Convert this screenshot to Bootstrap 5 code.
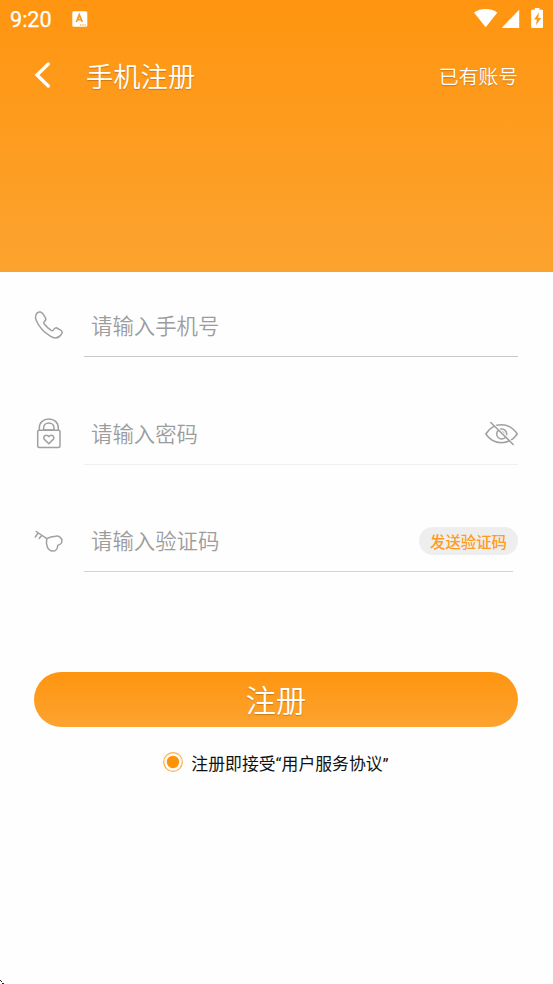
<!DOCTYPE html>
<html lang="zh-CN">
<head>
<meta charset="utf-8">
<meta name="viewport" content="width=device-width, initial-scale=1">
<title>手机注册</title>
<link rel="stylesheet" href="https://cdn.jsdelivr.net/npm/bootstrap@5.3.0/dist/css/bootstrap.min.css">
<style>
  body { font-family: Roboto, "Noto Sans CJK SC", sans-serif; font-weight: 350; background: #fefefe; height: 984px; overflow: hidden; }
  .hero { height: 272px; background: linear-gradient(#ff9510, #fca32f); }
  .status { height: 38px; padding: 0 9px 0 10px; }
  .clock { font-size: 21.6px; font-weight: 400; -webkit-text-stroke: .25px #fff; line-height: 38px; padding-top: 2px; width: 62px; }
  .topbar { height: 74px; padding: 0 35px 0 34px; }
  .topbar .title { font-size: 27.3px; line-height: 40px; margin-left: 35px; padding-top: 5px; font-weight: 350; }
  .has-account { font-size: 19.8px; line-height: 30px; padding-top: 5px; }
  .shade { text-shadow: 0 1px 1px rgba(110, 60, 0, .35); }
  .form-area { padding: 23px 35px 0 34px; }
  .line { display: grid; grid-template-columns: 50px 1fr; }
  .line > .glyph { height: 62px; padding-top: 16px; }
  .line > .glyph.raised { padding-top: 15px; }
  .line > .glyph.lowered { padding-top: 20px; }
  .line > .entry { height: 62px; border-bottom: 1px solid #c8c8c8; }
  .line + .line { margin-top: 46px; }
  .line + .line + .line { margin-top: 45px; }
  .line > .entry.soft { border-color: #f0f0f0; }
  .line > .entry.short { border-color: #d3d3d3; margin-right: 5px; }
  .entry input { font-size: 21.4px; font-weight: 350; line-height: 32px; height: 61px; padding: 2px 0 0 7px; min-width: 0; }
  .entry input::placeholder { color: #9c9c9c; opacity: 1; }
  .code-btn { width: 99px; height: 28px; margin-right: -5px; background: #eee; color: #ff9c1f; font-size: 15.4px; font-weight: 500; line-height: 32px; }
  .submit { height: 55px; margin-top: 100px; background: linear-gradient(#ff9510, #fca32f); font-size: 30.2px; line-height: 60px; font-weight: 350; }
  .agree { margin-top: 25px; height: 24px; font-size: 16.85px; line-height: 24px; font-weight: 400; color: #111; gap: 8px; }
  .agree svg { margin-bottom: 5px; }
  .ink { fill: none; stroke: #a0a0a0; stroke-width: 1.5; stroke-linecap: round; stroke-linejoin: round; }
  svg { display: block; flex: none; }
  .corner { position: absolute; left: 0; top: 980px; }
</style>
</head>
<body>
<header class="hero text-white">
  <div class="status d-flex align-items-center">
    <span class="clock">9:20</span>
    <svg width="16" height="17" viewBox="0 0 16 17">
      <rect x=".3" y=".2" width="15" height="15.6" rx="1.6" fill="#fff"/>
      <path d="M4.300 11 7.300 3.900 10.300 11M5.400 8.700h3.800" fill="none" stroke="#f79a22" stroke-width="1.800"/>
      <path d="M8 14h1.300m1 0h1.300m1 0h1.300" stroke="#f79a22" stroke-width="1.200"/>
    </svg>
    <svg class="ms-auto" width="70" height="22" viewBox="0 0 70 22" fill="#fff">
      <path d="M0 4.500C3.500 2 7.500.9 11.700.9S20 2 23.400 4.500L11.700 19.200Z"/>
      <path d="M45.200 1.700V19.900H27.600Z"/>
      <path d="M60.800 0h4.700v1.800h2.500q1 0 1 1V19q0 1-1 1h-9.800q-1 0-1-1V2.800q0-1 1-1h2.600Z"/>
      <path d="M65 4.500 60 11.500h2.800l-.8 5.700 5.200-7.300h-3Z" fill="#ff9814"/>
    </svg>
  </div>
  <nav class="topbar d-flex align-items-center">
    <svg width="17" height="28" viewBox="0 0 17 28"><path d="M14.300 3 3 14 14.300 25" fill="none" stroke="#fff" stroke-width="3.300" stroke-linecap="round"/></svg>
    <h1 class="title shade mb-0">手机注册</h1>
    <span class="has-account shade ms-auto">已有账号</span>
  </nav>
</header>

<main class="form-area">
  <div class="line">
    <div class="glyph">
      <svg class="ink" width="30" height="30" viewBox="0 0 30 30">
        <path d="M3.300 1.900C5.200.1 7.700.8 9.300 3.400L11.600 7.100C12.600 8.800 11.100 9.800 10.100 10.900C9.600 11.500 9.700 12.100 10.100 12.700C12 15.300 14.400 17.500 17.200 19.400C18 19.900 18.600 19.800 19.100 19.200C20.100 17.800 21.200 16.200 22.800 17L26.700 19.100C28.600 20.300 28.600 21.800 27 23.700C24.500 27.200 20.500 27.800 16.300 25.200C9.800 21.200 4.900 15.700 2.300 9.500C1.100 6.500 1.400 3.600 3.300 1.900Z"/>
      </svg>
    </div>
    <div class="entry d-flex align-items-center"><input type="tel" class="form-control border-0 bg-transparent shadow-none" placeholder="请输入手机号"></div>
  </div>

  <div class="line">
    <div class="glyph raised">
      <svg class="ink" width="30" height="32" viewBox="0 0 30 32">
        <rect x="3.700" y="12.300" width="22.300" height="17.300" rx="1.500"/>
        <path d="M5.300 12V10C5.300 4.500 9.400.9 14.800.9S24.300 4.500 24.300 10v2M9.600 12V9.900C9.600 7 11.800 4.900 14.800 4.900S20 7 20 9.900V12Z"/>
        <path d="M14.800 25.700 10.400 21.400C8.200 19 11.800 15.300 14.800 18.600C17.800 15.300 21.400 19 19.200 21.400Z"/>
      </svg>
    </div>
    <div class="entry soft d-flex align-items-center">
      <input type="password" class="form-control border-0 bg-transparent shadow-none" placeholder="请输入密码">
      <svg class="ink" width="33" height="26" viewBox="0 0 33 26">
        <path d="M.8 13C8.500.8 24.500.8 32.200 13C24.500 24.500 8.500 24.500 .8 13Z"/>
        <circle cx="16.700" cy="13" r="5"/><path d="M16.500 10.700a2.400 2.400 0 0 1 2.400 2.600"/>
        <path d="M7.200 1.500 29.500 23" stroke="#fefefe" stroke-width="1.200"/><path d="M5.800 1.500 28.200 23.500"/>
      </svg>
    </div>
  </div>

  <div class="line">
    <div class="glyph lowered">
      <svg class="ink" width="30" height="30" viewBox="0 0 30 30">
        <path d="M2.200 1.500 12.800 8.600M4.200 3 1.300 7M7.700 5.300 5.300 8.500"/>
        <path d="M12.800 8.600C15.500 7 18.500 6.300 21.400 6.200C25.200 5.700 28.400 8 27.900 11.200C27.700 13.200 26.200 14.700 23.800 15.200C23.500 18.700 21.600 21.200 18.700 21.100C13.500 21 11.500 14.500 12.800 8.600Z"/>
      </svg>
    </div>
    <div class="entry short d-flex align-items-center">
      <input type="text" class="form-control border-0 bg-transparent shadow-none" placeholder="请输入验证码">
      <button type="button" class="code-btn btn rounded-pill border-0 p-0 flex-shrink-0">发送验证码</button>
    </div>
  </div>

  <button type="button" class="submit btn w-100 rounded-pill border-0 p-0 text-white shade">注册</button>

  <div class="agree d-flex justify-content-center align-items-center">
    <svg width="20" height="20" viewBox="0 0 20 20"><circle cx="10" cy="10" r="9.300" fill="none" stroke="#ffae4c" stroke-width="1.200"/><circle cx="10" cy="10" r="6.200" fill="#ff9307"/></svg>
    <span>注册即接受“用户服务协议”</span>
  </div>
</main>
<svg class="corner" width="4" height="4" viewBox="0 0 4 4" fill="#222"><path d="M0 0h1v1H0zM1 1h1v1H1zM2 3h2v1H2z"/></svg>
<script src="https://cdn.jsdelivr.net/npm/bootstrap@5.3.0/dist/js/bootstrap.bundle.min.js"></script>
</body>
</html>
